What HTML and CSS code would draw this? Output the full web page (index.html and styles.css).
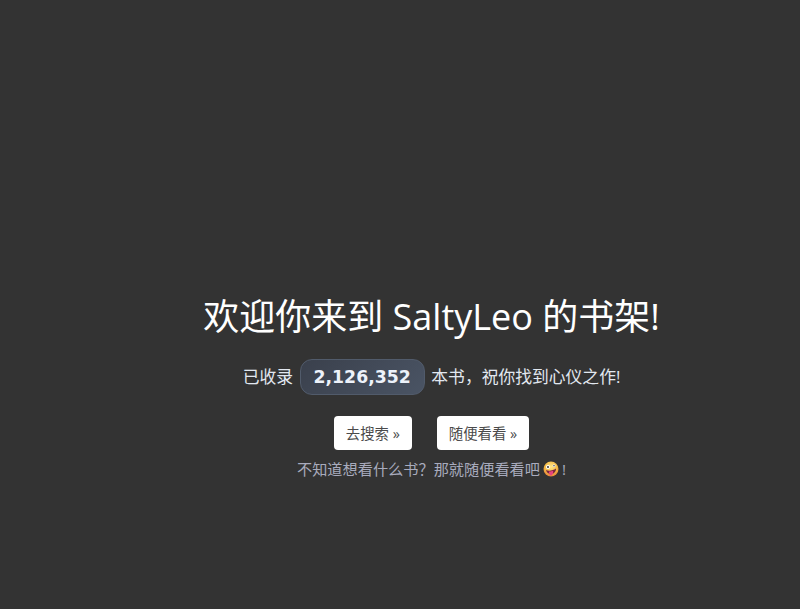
FILE: index.html
```html
<!DOCTYPE html>
<html lang="zh-CN">
  <head>
    <meta charset="UTF-8" />
    <meta name="viewport" content="width=device-width, initial-scale=1.0" />
    <title>SaltyLeo 的书架</title>
    <link rel="stylesheet" href="styles.css">
  </head>
  <body>
    <main class="hero">
      <h1>欢迎你来到 SaltyLeo 的书架!</h1>
      <p class="count-line">
        <span>已收录</span>
        <span class="count-badge">2,126,352</span>
        <span>本书，祝你找到心仪之作!</span>
      </p>
      <div class="actions">
        <a class="btn" href="#">去搜索 »</a>
        <a class="btn" href="#">随便看看 »</a>
      </div>
      <p class="hint">
        不知道想看什么书？那就随便看看吧
        <!-- zany face emoji -->
        <svg class="emoji" viewBox="0 0 16 16" aria-hidden="true">
          <defs>
            <radialGradient id="faceFill" cx="0.5" cy="0.35" r="0.7">
              <stop offset="0" stop-color="#fde68a" />
              <stop offset="0.6" stop-color="#f5b942" />
              <stop offset="1" stop-color="#e0703a" />
            </radialGradient>
          </defs>
          <circle cx="8" cy="8" r="7.5" fill="url(#faceFill)" />
          <circle cx="5" cy="6" r="2" fill="#fff" />
          <circle cx="5" cy="6" r="0.9" fill="#222" />
          <circle cx="11" cy="4.8" r="1.4" fill="#fff" />
          <circle cx="11" cy="4.8" r="0.7" fill="#222" />
          <path d="M3 9 C6 10.5 10 9.5 13 7.5 C13.2 11 10.5 13 8 13 C5.5 13 3.5 11.5 3 9 Z" fill="#7a2340" />
          <path d="M6 10.5 C7.5 10.5 9 10.2 10 9.8 C10.6 12 9.6 14.6 8 14.6 C6.6 14.6 5.8 12.5 6 10.5 Z" fill="#e8447e" />
        </svg>
        !
      </p>
    </main>
  </body>
</html>
```

FILE: styles.css
```css
* {
  margin: 0;
  padding: 0;
  box-sizing: border-box;
}

body {
  background-color: #333333;
  min-height: 100vh;
  font-family: "Open Sans", "Noto Sans CJK SC", sans-serif;
}

.hero {
  display: flex;
  flex-direction: column;
  align-items: center;
  padding: 293px 0 0 63px;
}

h1 {
  color: #ffffff;
  font-family: "Open Sans", "Noto Sans CJK SC", sans-serif;
  font-size: 36px;
  font-weight: 400;
  line-height: 48px;
  white-space: nowrap;
}

.count-line {
  display: flex;
  align-items: center;
  gap: 6.5px;
  margin-top: 18px;
  color: #e2e8f0;
  font-size: 16.8px;
  line-height: 36px;
}

.count-badge {
  padding: 0 13px;
  height: 36px;
  border: 1px solid #515b6b;
  border-radius: 12px;
  background: linear-gradient(135deg, #3a404c, #4a5464);
  color: #edf2fa;
  font-family: "DejaVu Sans", sans-serif;
  font-size: 17.3px;
  font-weight: 700;
  line-height: 34px;
}

.actions {
  display: flex;
  gap: 25px;
  margin-top: 21px;
}

.btn {
  padding: 0 12px;
  height: 34px;
  border-radius: 4px;
  background-color: #ffffff;
  color: #4a4a4a;
  font-size: 14.4px;
  line-height: 36px;
  text-decoration: none;
}

.hint {
  display: flex;
  align-items: center;
  gap: 3px;
  margin-top: 8px;
  color: #a8abbd;
  font-size: 15.2px;
  line-height: 22px;
}

.emoji {
  width: 16px;
  height: 16px;
}
```
